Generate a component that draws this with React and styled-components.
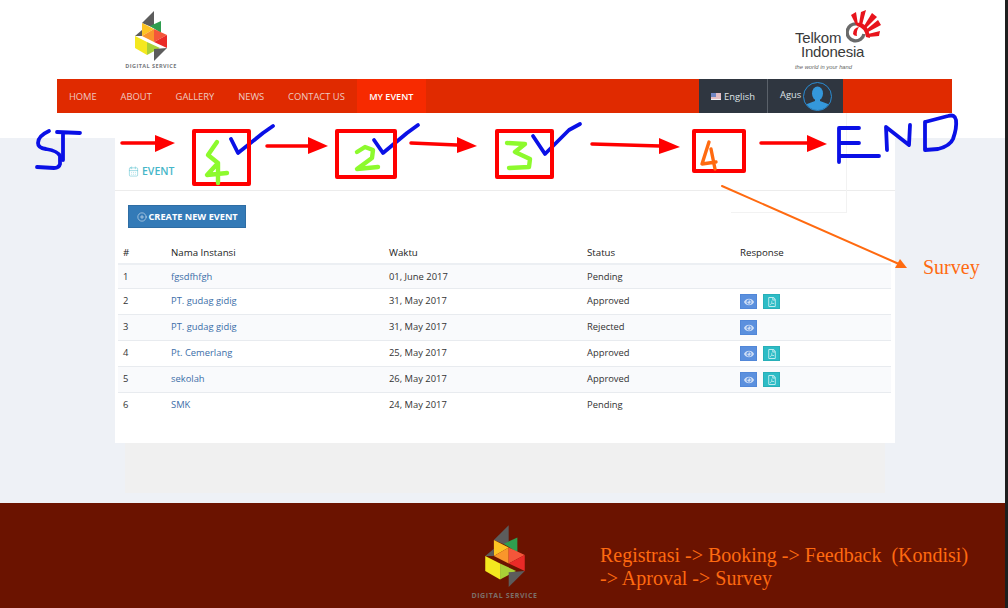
import styled, { createGlobalStyle } from "styled-components";
import { CalendarDays, CirclePlus } from "lucide-react";
import { FaEye, FaRegFilePdf } from "react-icons/fa";

const GlobalStyle = createGlobalStyle`
  body {
    margin: 0;
    background: #1e1e1e;
    font-family: "Open Sans", sans-serif;
    font-size: 9.4px;
    color: #333;
  }
`;

const events = [
  { id: 1, name: "fgsdfhfgh", date: "01, June 2017", status: "Pending" },
  { id: 2, name: "PT. gudag gidig", date: "31, May 2017", status: "Approved", eye: true, pdf: true },
  { id: 3, name: "PT. gudag gidig", date: "31, May 2017", status: "Rejected", eye: true },
  { id: 4, name: "Pt. Cemerlang", date: "25, May 2017", status: "Approved", eye: true, pdf: true },
  { id: 5, name: "sekolah", date: "26, May 2017", status: "Approved", eye: true, pdf: true },
  { id: 6, name: "SMK", date: "24, May 2017", status: "Pending" },
];

const navItems = ["HOME", "ABOUT", "GALLERY", "NEWS", "CONTACT US", "MY EVENT"];

const LogoMark = ({ width }) => (
  <svg width={width} viewBox="0 0 34 52" style={{ display: "block" }}>
    <polygon points="20,1 20,18 8,13" fill="#5c5c5c" />
    <polygon points="27,11 27,23 16,16" fill="#2f9e4f" />
    <polygon points="8,13 20,19 8,26" fill="#fdc423" />
    <polygon points="20,19 20,32 8,26" fill="#f9962b" />
    <polygon points="20,19 33,25 20,32" fill="#f4563a" />
    <polygon points="33,25 33,38 20,32" fill="#ea2a27" />
    <polygon points="1,26 8,20 8,26" fill="#5c5c5c" />
    <polygon points="1,26 13,32 13,45 1,38" fill="#f4e81f" />
    <polygon points="13,32 26,38 13,45" fill="#a9d037" />
    <polygon points="20,39 33,38 20,51" fill="#5c5c5c" />
  </svg>
);

const TelkomMark = () => (
  <svg width="36" height="34" viewBox="0 0 36 34" style={{ display: "block" }}>
    <path d="M11 14 A8.5 8.5 0 1 0 18 24" fill="none" stroke="#6a6a6a" strokeWidth="3.4" />
    <path d="M7 24 Q7 18 13 17 Q10 21 11 26 Q8 26 7 24Z" fill="#e8141c" />
    <path d="M10 13 Q22 11 24 28 L20 27 Q19 18 11 16Z" fill="#e8141c" />
    <g fill="#e8141c">
      <polygon points="5,5 10,2 12,15 10,15" />
      <polygon points="15,2 20,0 16,15 13,14" />
      <polygon points="26,3 31,7 20,18 18,16" />
      <polygon points="32,10 35,15 22,22 21,19" />
      <polygon points="34,21 33,26 22,27 22,24" />
    </g>
  </svg>
);

const Flag = () => (
  <svg width="10" height="7" viewBox="0 0 10 7">
    <rect width="10" height="7" fill="#eef0f4" />
    <path d="M0 1h10M0 3h10M0 5h10" stroke="#d98a92" strokeWidth="1" />
    <rect width="5" height="4" fill="#6f86c4" />
  </svg>
);

const Avatar = () => (
  <svg width="29" height="29" viewBox="0 0 29 29">
    <defs>
      <clipPath id="avatarClip">
        <circle cx="14.5" cy="14.5" r="13.5" />
      </clipPath>
    </defs>
    <circle cx="14.5" cy="14.5" r="14" fill="#2f3640" stroke="#2a8dd4" strokeWidth="1" />
    <g clipPath="url(#avatarClip)" fill="#3498db">
      <ellipse cx="14.5" cy="11.5" rx="5.5" ry="7" />
      <path d="M12 16h5v3l8 3v8H4v-8l8-3z" />
    </g>
  </svg>
);

const Annotations = () => (
  <Overlay viewBox="0 0 1008 608">
    <g fill="none" stroke="#0a10e6" strokeWidth="3.8" strokeLinecap="round" strokeLinejoin="round">
      <path d="M49 131 Q38 136 38 143 Q38 148 46 149 Q58 151 60 156 L60 164 Q59 168 54 168 L37 167" />
      <path d="M57 132 L80 133 M63 133 L63 160" />
      <path d="M231 139 L238 153 L263 133 L273 126" />
      <path d="M374 140 L383 153 L407 133 L418 125" />
      <path d="M533 136 L545 154 L569 130 L580 124" />
      <path d="M859 128 L839 128 L839 162 M840 143 L859 143 M839 156 L879 156" />
      <path d="M887 150 L886 127 L909 145 L910 125" />
      <path d="M925 122 L925 150 L938 149 Q950 146 953 139 Q957 128 956 120 Q955 114 948 116 L925 122" />
    </g>
    <g fill="none" stroke="#ff0000" strokeWidth="3.5" strokeLinecap="round">
      <path d="M122 143 L157 143 M267 146 L308 146 M411 143 L457 145 M592 144 L660 146 M761 143 L807 143" />
    </g>
    <g fill="#ff0000">
      <polygon points="155,135 175,143 155,152" />
      <polygon points="308,137 328,146 308,154" />
      <polygon points="457,137 477,146 457,153" />
      <polygon points="659,138 680,147 659,154" />
      <polygon points="807,135 827,144 807,152" />
    </g>
    <g fill="none" stroke="#ff0000" strokeWidth="4" strokeLinejoin="round">
      <rect x="194" y="131" width="55" height="53" />
      <rect x="337" y="131" width="58" height="46" />
      <rect x="497" y="131" width="55" height="46" />
      <rect x="694" y="131" width="50" height="40" />
    </g>
    <g fill="none" stroke="#8dfa2d" strokeWidth="4.4" strokeLinecap="round" strokeLinejoin="round">
      <path d="M217 142 L208 155 L218 163 L207 175 L227 173 M218 163 L218 183" />
      <path d="M357 152 L365 147 L373 150 L372 158 L357 169 L378 167" />
      <path d="M507 143 L525 144 L515 152 L530 159 L529 167 L509 168" />
    </g>
    <g fill="none" stroke="#ff6a10" strokeLinecap="round" strokeLinejoin="round">
      <path d="M709 142 L702 164 L716 162 M711 149 L715 169" strokeWidth="3.4" />
      <path d="M722 186 L899 264" strokeWidth="2" />
    </g>
    <polygon points="907,268 895,268 900,259" fill="#ff6a10" />
  </Overlay>
);

const App = () => (
  <Page>
    <GlobalStyle />
    <Top>
      <Brand>
        <Digital>
          <LogoMark width={34} />
          <DigitalName>DIGITAL SERVICE</DigitalName>
        </Digital>
        <Telkom>
          <TelkomWords>
            <TelkomName>Telkom</TelkomName>
            <TelkomName indent>Indonesia</TelkomName>
            <Tagline>the world in your hand</Tagline>
          </TelkomWords>
          <TelkomIcon>
            <TelkomMark />
          </TelkomIcon>
        </Telkom>
      </Brand>
      <Nav>
        {navItems.map((item) => (
          <NavItem key={item} active={item === "MY EVENT"}>
            {item}
          </NavItem>
        ))}
        <NavUser>
          <NavCell>
            <Flag />
            English
          </NavCell>
          <NavCell divided>
            <AgusName>Agus</AgusName>
            <Avatar />
          </NavCell>
        </NavUser>
      </Nav>
    </Top>
    <Main>
      <Card>
        <GhostBox />
        <CardHead>
          <CalendarDays size={11} strokeWidth={1.2} color="#5fc3d2" />
          <CardTitle>EVENT</CardTitle>
        </CardHead>
        <CardBody>
          <CreateButton>
            <CirclePlus size={10} strokeWidth={1.2} />
            CREATE NEW EVENT
          </CreateButton>
          <Table>
            <thead>
              <tr>
                <Th width={48}>#</Th>
                <Th width={218}>Nama Instansi</Th>
                <Th width={198}>Waktu</Th>
                <Th width={153}>Status</Th>
                <Th>Response</Th>
              </tr>
            </thead>
            <tbody>
              {events.map((row) => (
                <Row key={row.id}>
                  <Td>{row.id}</Td>
                  <Td>
                    <Link>{row.name}</Link>
                  </Td>
                  <Td>{row.date}</Td>
                  <Td>{row.status}</Td>
                  <Td>
                    <Actions>
                      {row.eye && (
                        <ActionButton bg="#5b90de" edge="#5187d8">
                          <FaEye size={10} />
                        </ActionButton>
                      )}
                      {row.pdf && (
                        <ActionButton bg="#2dbcc6" edge="#28afb8">
                          <FaRegFilePdf size={10} />
                        </ActionButton>
                      )}
                    </Actions>
                  </Td>
                </Row>
              ))}
            </tbody>
          </Table>
        </CardBody>
      </Card>
      <CardShadow />
    </Main>
    <Footer>
      <FooterLogo>
        <LogoMark width={42} />
        <FooterLogoName>DIGITAL SERVICE</FooterLogoName>
      </FooterLogo>
      <FooterNote>
        {"Registrasi -> Booking -> Feedback  (Kondisi)\n-> Aproval -> Survey"}
      </FooterNote>
    </Footer>
    <Annotations />
    <SurveyNote>Survey</SurveyNote>
  </Page>
);

export default App;

const Page = styled.div`
  position: relative;
  display: flex;
  flex-direction: column;
  width: 1005px;
  height: 608px;
  overflow: hidden;
  background: #eef1f6;
`;

const Top = styled.header`
  background: #fff;
  padding-bottom: 25px;
`;

const Brand = styled.div`
  display: flex;
  justify-content: space-between;
  height: 79px;
  padding: 10px 123px 0 125px;
  box-sizing: border-box;
`;

const Digital = styled.div`
  display: flex;
  flex-direction: column;
  align-items: center;
  width: 52px;
`;

const DigitalName = styled.span`
  margin-top: 1px;
  font-size: 5.5px;
  line-height: 7px;
  font-weight: 700;
  letter-spacing: 0.45px;
  white-space: nowrap;
  color: #77797c;
`;

const Telkom = styled.div`
  position: relative;
  width: 87px;
`;

const TelkomWords = styled.div`
  display: flex;
  flex-direction: column;
  padding-top: 21px;
`;

const TelkomName = styled.span`
  padding-left: ${(props) => (props.indent ? "6px" : "0")};
  font-family: "Liberation Sans", sans-serif;
  font-size: 15px;
  line-height: 14px;
  color: #3a3a3a;
  letter-spacing: -0.2px;
`;

const Tagline = styled.span`
  margin-top: 5px;
  font-family: "Liberation Sans", sans-serif;
  font-size: 5.8px;
  line-height: 7px;
  font-style: italic;
  color: #666;
`;

const TelkomIcon = styled.div`
  position: absolute;
  top: 0;
  left: 51px;
`;

const Nav = styled.nav`
  display: flex;
  height: 34px;
  margin: 0 53px 0 57px;
  background: #e02a00;
`;

const NavItem = styled.a`
  display: flex;
  align-items: center;
  padding: 0 ${(props) => (props.active ? "12.5px" : "11.9px")};
  font-size: ${(props) => (props.active ? "9.1px" : "9.4px")};
  font-weight: ${(props) => (props.active ? 600 : 400)};
  color: ${(props) => (props.active ? "#fff" : "#eec9c0")};
  background: ${(props) => (props.active ? "#f72a00" : "transparent")};
  white-space: nowrap;
`;

const NavUser = styled.div`
  display: flex;
  width: 144px;
  margin-left: auto;
  margin-right: 109px;
  background: #2f3640;
  color: #dfe3e8;
`;

const NavCell = styled.div`
  display: flex;
  align-items: center;
  flex: ${(props) => (props.divided ? 1 : "none")};
  width: ${(props) => (props.divided ? "auto" : "68px")};
  gap: ${(props) => (props.divided ? "2px" : "3px")};
  padding-left: 12px;
  box-sizing: border-box;
  border-left: ${(props) => (props.divided ? "1px solid #5a616a" : "none")};
`;

const AgusName = styled.span`
  margin-top: -3px;
`;

const Main = styled.main`
  flex: 1;
  padding-left: 115px;
`;

const Card = styled.section`
  position: relative;
  width: 780px;
  height: 305px;
  background: #fff;
`;

const GhostBox = styled.div`
  position: absolute;
  top: -25px;
  left: 616px;
  width: 115px;
  height: 99px;
  border-right: 1px solid #f2f2f2;
  border-bottom: 1px solid #f2f2f2;
`;

const CardHead = styled.div`
  display: flex;
  align-items: center;
  gap: 3px;
  height: 53px;
  padding: 14px 0 0 13px;
  box-sizing: border-box;
  border-bottom: 1px solid #ececec;
`;

const CardTitle = styled.span`
  font-size: 10.5px;
  font-weight: 600;
  color: #45b6c8;
`;

const CardBody = styled.div`
  padding: 14px 4px 0 3px;
`;

const CreateButton = styled.button`
  display: flex;
  align-items: center;
  gap: 2px;
  height: 23px;
  margin: 0 0 12px 10px;
  padding: 0 7.5px;
  border: 1px solid #2e6da4;
  background: #337ab7;
  color: #fff;
  font-family: inherit;
  font-size: 9.2px;
  font-weight: 700;
`;

const Table = styled.table`
  width: 773px;
  border-collapse: collapse;
  table-layout: fixed;
`;

const Th = styled.th`
  box-sizing: border-box;
  width: ${(props) => (props.width ? `${props.width}px` : "auto")};
  padding: 6px 5px 4px;
  font-size: 9.7px;
  font-weight: 400;
  line-height: 13px;
  text-align: left;
  color: #222;
  border-bottom: 2px solid #eceff3;
`;

const Row = styled.tr`
  &:nth-child(odd) {
    background: #f9fafc;
  }
  &:not(:last-child) {
    border-bottom: 1px solid #e8ebef;
  }
`;

const Td = styled.td`
  padding: 5px;
  line-height: 13px;
  vertical-align: top;
  color: #333;
`;

const Link = styled.a`
  color: #3c6ea8;
`;

const Actions = styled.div`
  display: flex;
  gap: 6px;
`;

const ActionButton = styled.span`
  display: flex;
  align-items: center;
  justify-content: center;
  width: 17px;
  height: 15px;
  box-sizing: border-box;
  background: ${(props) => props.bg};
  border: 1px solid ${(props) => props.edge};
  color: rgba(255, 255, 255, 0.7);
`;

const CardShadow = styled.div`
  width: 760px;
  height: 50px;
  margin-left: 10px;
  background: #f0f0f0;
`;

const Footer = styled.footer`
  display: flex;
  height: 105px;
  padding: 21px 0 0 471px;
  box-sizing: border-box;
  background: #6b1300;
`;

const FooterLogo = styled.div`
  display: flex;
  flex-direction: column;
  align-items: center;
  width: 67px;
`;

const FooterLogoName = styled.span`
  margin-top: 3px;
  font-size: 7px;
  line-height: 10px;
  font-weight: 700;
  letter-spacing: 0.6px;
  white-space: nowrap;
  color: #7b6f69;
`;

const FooterNote = styled.p`
  margin: 20px 0 0 62px;
  font-family: "Liberation Serif", serif;
  font-size: 20px;
  line-height: 23px;
  white-space: pre;
  color: #ff6a10;
`;

const Overlay = styled.svg`
  position: absolute;
  top: 0;
  left: 0;
  width: 1008px;
  height: 608px;
  pointer-events: none;
`;

const SurveyNote = styled.span`
  position: absolute;
  top: 256px;
  left: 923px;
  font-family: "Liberation Serif", serif;
  font-size: 20px;
  line-height: 23px;
  color: #ff6a10;
`;
